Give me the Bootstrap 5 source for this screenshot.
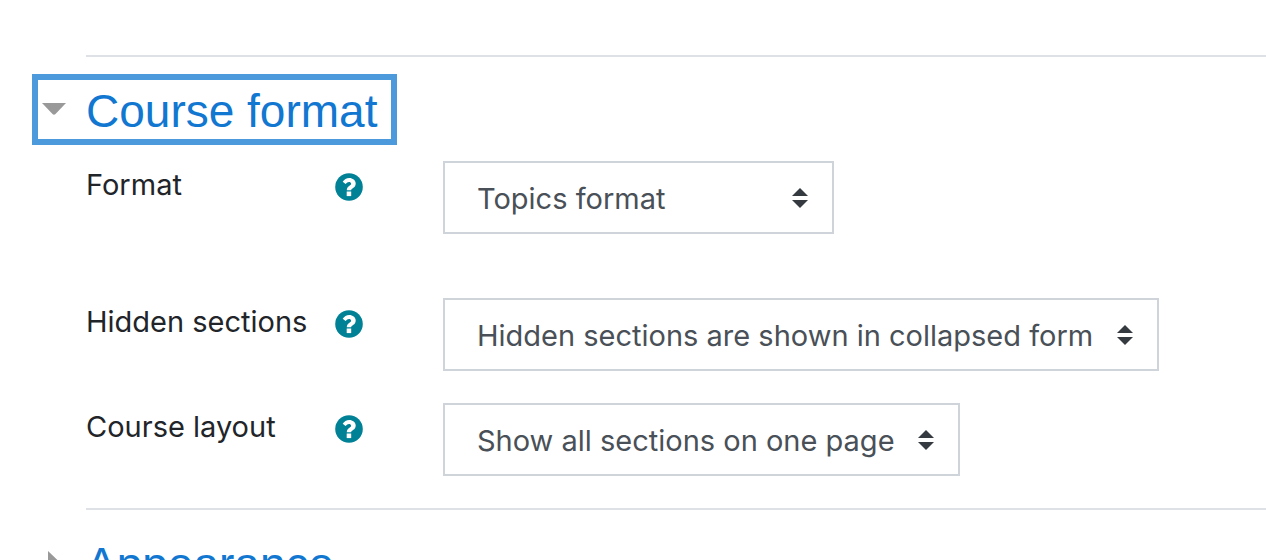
<!DOCTYPE html>
<html lang="en">
<head>
<meta charset="utf-8">
<meta name="viewport" content="width=device-width, initial-scale=1">
<title>Course format</title>
<link href="https://cdn.jsdelivr.net/npm/bootstrap@5.3.0/dist/css/bootstrap.min.css" rel="stylesheet">
<style>
  body { font-family: Inter, "Liberation Sans", sans-serif; font-size: 29px; line-height: 48px; color: #212529; overflow-x: hidden; }
  .settings { padding: 55px 0 0 32px; }
  .section-rule { margin: 0 0 17px 54px; border-top: 2px solid #dee2e6; opacity: 1; color: inherit; }
  .section-head { border: 6px solid transparent; padding: 0 14px 0 4px; gap: 20px; height: 71px; color: #1177d1; font-family: "Liberation Sans", sans-serif; font-size: 46px; line-height: 60px; font-weight: 400; text-decoration: none; white-space: nowrap; }
  .section-head.active { border-color: #4c9adc; }
  .section-head span { padding-top: 2px; }
  .section-head svg { width: 24px; height: 24px; fill: #999; }
  .section-body { padding: 16px 0 32px 54px; }
  .setting-row { column-gap: 80px; margin-bottom: 32px; }
  .setting-row.spaced { margin-bottom: 64px; }
  .setting-row:last-child { margin-bottom: 0; }
  .setting-name { width: 277px; }
  .help-btn.btn { line-height: 0; margin-top: 12px; }
  .help-btn svg { width: 28px; height: 28px; }
  .form-select.setting-select { max-width: 100%; height: 73px; border: 2px solid #ced4da; padding: 2px 64px 0 32px; font-size: 29px; line-height: 46px; color: #495057; background-color: #fff; background-position: right 24px center; background-size: 16px 20px;
    background-image: url("data:image/svg+xml,%3csvg xmlns='http://www.w3.org/2000/svg' viewBox='0 0 4 5'%3e%3cpath fill='%23343a40' d='M2 0L0 2h4zm0 5L0 3h4z'/%3e%3c/svg%3e"); }
  .w-format { width: 391px; }
  .w-hidden { width: 716px; }
  .w-layout { width: 517px; }
</style>
</head>
<body>
<svg class="d-none" xmlns="http://www.w3.org/2000/svg">
  <symbol id="help" viewBox="0 0 28 28">
    <circle cx="14" cy="14" r="13.8" fill="#008196"/>
    <path d="M7.700 8.800C9.300 6.200 11.400 4.900 14.300 4.900c3.300 0 6.400 2.300 6.400 5.500 0 4.700-4.600 4.600-4.600 6.900h-4.300c0-4.400 4.300-4.600 4.300-6.600 0-1.200-1-1.800-2.100-1.800-1.400 0-2.200.8-3.400 2.200z" fill="#fff"/>
    <path d="M11.700 18.500h4.500v4.600h-4.500z" fill="#fff"/>
  </symbol>
</svg>
<main class="settings">
  <hr class="section-rule">
  <section>
    <h2 class="m-0 d-flex"><a href="#format-body" class="section-head active d-inline-flex align-items-center" aria-expanded="true"><svg viewBox="0 0 24 24" aria-hidden="true"><path d="M0 5h24L13.5 16q-1.5 1.500-3 0z"/></svg><span>Course format</span></a></h2>
    <form class="section-body" id="format-body">
      <div class="setting-row spaced d-flex align-items-start">
        <div class="setting-name d-flex justify-content-between align-items-start flex-shrink-0"><label for="format">Format</label><button type="button" class="help-btn btn btn-link p-0 border-0" aria-label="Help with Format"><svg><use href="#help"/></svg></button></div>
        <select id="format" class="form-select setting-select w-format rounded-0"><option>Topics format</option><option>Weekly format</option></select>
      </div>
      <div class="setting-row d-flex align-items-start">
        <div class="setting-name d-flex justify-content-between align-items-start flex-shrink-0"><label for="hidden">Hidden sections</label><button type="button" class="help-btn btn btn-link p-0 border-0" aria-label="Help with Hidden sections"><svg><use href="#help"/></svg></button></div>
        <select id="hidden" class="form-select setting-select w-hidden rounded-0"><option>Hidden sections are shown in collapsed form</option></select>
      </div>
      <div class="setting-row d-flex align-items-start">
        <div class="setting-name d-flex justify-content-between align-items-start flex-shrink-0"><label for="layout">Course layout</label><button type="button" class="help-btn btn btn-link p-0 border-0" aria-label="Help with Course layout"><svg><use href="#help"/></svg></button></div>
        <select id="layout" class="form-select setting-select w-layout rounded-0"><option>Show all sections on one page</option></select>
      </div>
    </form>
  </section>
  <hr class="section-rule">
  <section>
    <h2 class="m-0 d-flex"><a href="#appearance" class="section-head d-inline-flex align-items-center" aria-expanded="false"><svg viewBox="0 0 24 24" aria-hidden="true"><path d="M6 0v24L17 13.500q1.500-1.500 0-3z"/></svg><span>Appearance</span></a></h2>
  </section>
</main>
<script src="https://cdn.jsdelivr.net/npm/bootstrap@5.3.0/dist/js/bootstrap.bundle.min.js"></script>
</body>
</html>
